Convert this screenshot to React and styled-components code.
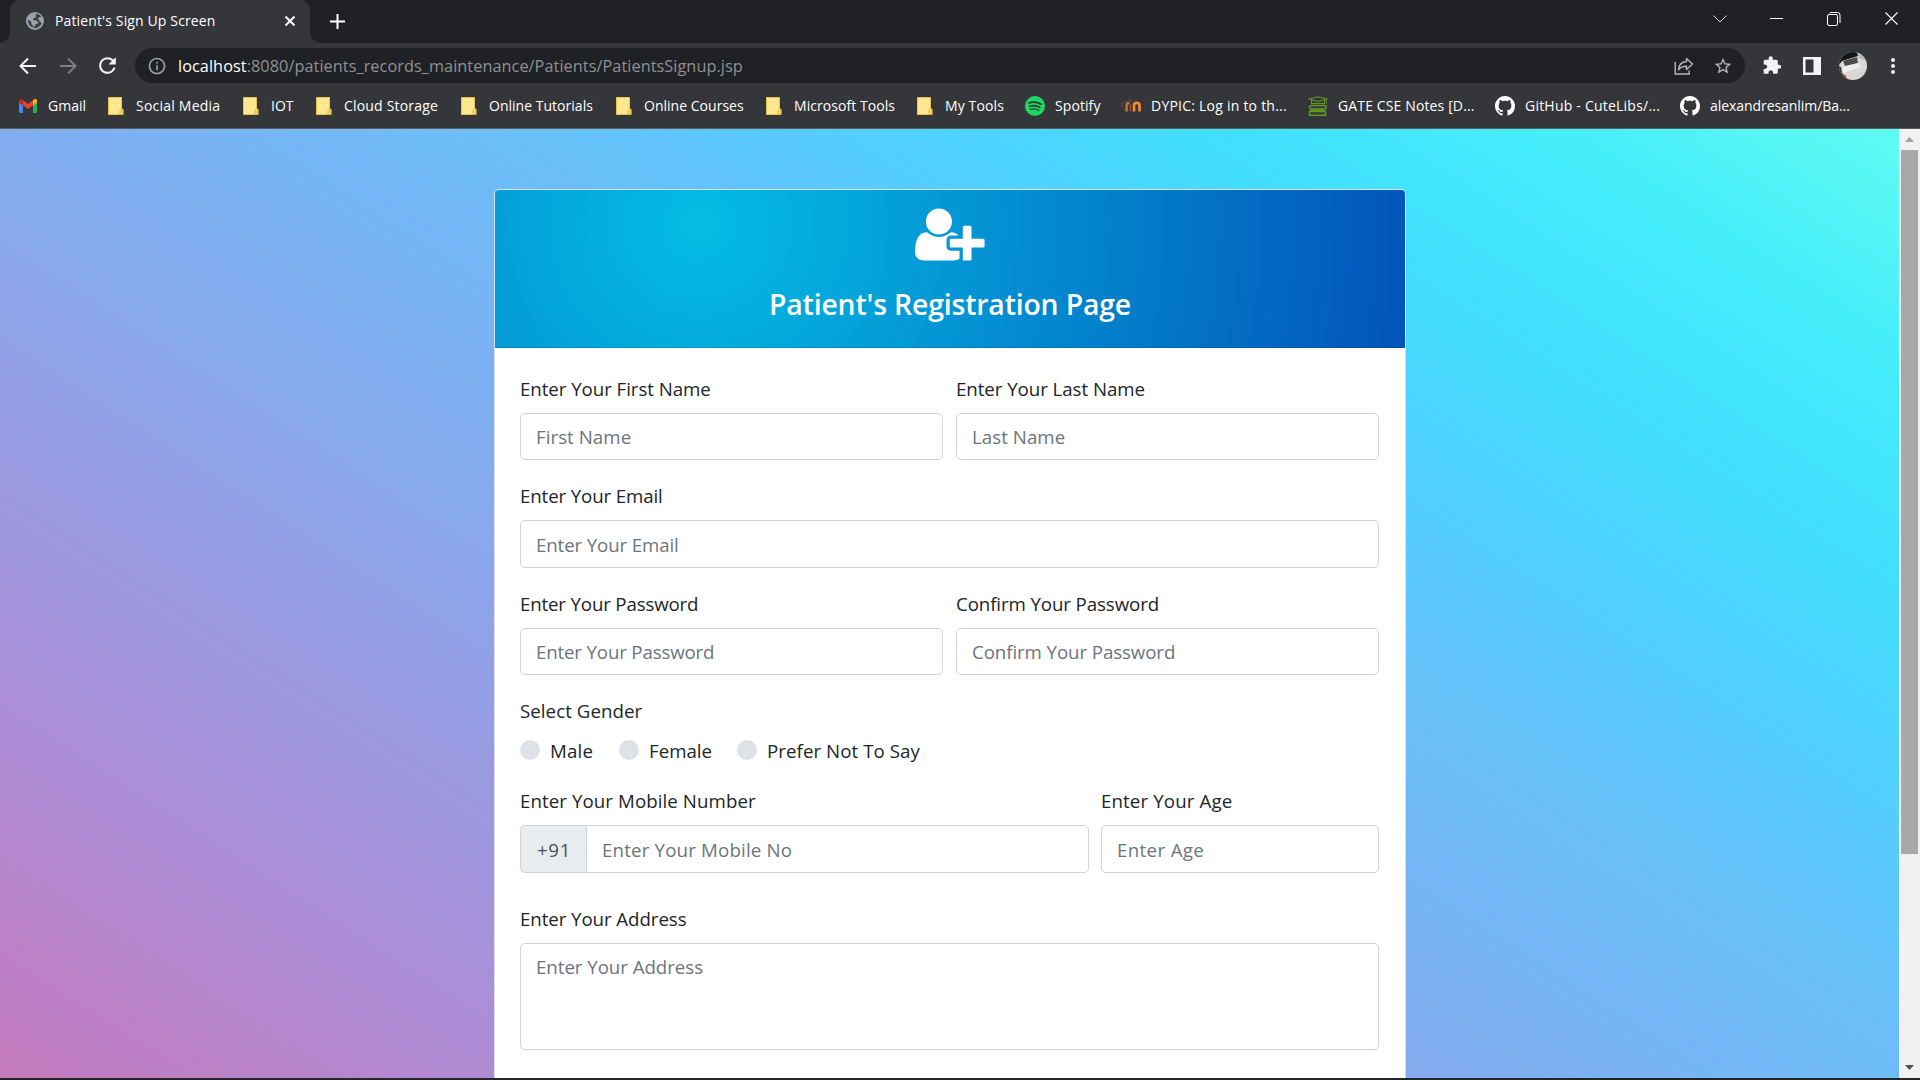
import React from "react";
import styled, { createGlobalStyle } from "styled-components";
import { MdRefresh, MdInfoOutline, MdStarBorder, MdExtension } from "react-icons/md";

const GlobalStyle = createGlobalStyle`
  *, *::before, *::after { box-sizing: border-box; }
  html, body { margin: 0; padding: 0; overflow: hidden; }
  body { font-family: "Segoe UI", "Open Sans", "Noto Sans", sans-serif; background: #202124; }
`;

const Window = styled.div`
  width: 1920px;
  height: 1080px;
  display: flex;
  flex-direction: column;
  overflow: hidden;
  background: #242526;
`;

/* ---------- Tab strip ---------- */
const TabStrip = styled.div`
  height: 43px;
  flex: none;
  display: flex;
  background: #202124;
  padding-left: 10px;
`;

const Tab = styled.div`
  position: relative;
  width: 300px;
  height: 43px;
  display: flex;
  align-items: center;
  padding: 0 12px 1px 15px;
  background: #35363a;
  border-radius: 10px 10px 0 0;
  color: #fff;
  &::before, &::after {
    content: "";
    position: absolute;
    bottom: 0;
    width: 10px;
    height: 10px;
  }
  &::before {
    left: -10px;
    background: radial-gradient(circle at 0 0, transparent 9.5px, #35363a 10px);
  }
  &::after {
    right: -10px;
    background: radial-gradient(circle at 100% 0, transparent 9.5px, #35363a 10px);
  }
`;

const Favicon = styled.span`
  display: flex;
  width: 20px;
  padding-left: 1px;
`;

const TabTitle = styled.span`
  flex: 1;
  padding-left: 10px;
  font-size: 14px;
  line-height: 20px;
  letter-spacing: 0.13px;
  white-space: nowrap;
`;

const Glyph = styled.span`
  display: flex;
  align-items: center;
  justify-content: center;
  flex: none;
  width: ${(p) => p.$w || 20}px;
  height: ${(p) => p.$h || 20}px;
  margin-left: ${(p) => p.$ml || 0}px;
  color: ${(p) => p.$c || "#fff"};
`;

const WindowButtons = styled.div`
  display: flex;
  margin-left: auto;
  height: 37px;
`;

/* ---------- Toolbar ---------- */
const Toolbar = styled.div`
  height: 45px;
  flex: none;
  display: flex;
  align-items: center;
  background: #35363a;
  padding-left: 7.5px;
`;

const AddressBar = styled.div`
  display: flex;
  align-items: center;
  width: 1610px;
  height: 35px;
  margin-left: 7.5px;
  border-radius: 18px;
  background: #202124;
  padding: 0 12px;
`;

const Url = styled.span`
  flex: 1;
  padding-left: 11px;
  font-size: 16.3px;
  line-height: 24px;
  letter-spacing: 0.05px;
  color: #8f9194;
  white-space: nowrap;
`;

const Host = styled.span`
  color: #fff;
`;

const Avatar = styled.span`
  display: flex;
  width: 28px;
  height: 28px;
  border-radius: 50%;
  overflow: hidden;
  margin-left: 17px;
`;

/* ---------- Bookmarks ---------- */
const BookmarkBar = styled.div`
  height: 41px;
  flex: none;
  display: flex;
  background: #35363a;
  border-bottom: 1px solid #5b5c60;
  padding-left: 18px;
`;

const Bookmark = styled.div`
  display: flex;
  align-items: center;
  flex: none;
  width: ${(p) => p.$w}px;
  height: 35px;
`;

const BookmarkText = styled.span`
  padding-left: 10px;
  font-size: 14px;
  line-height: 20px;
  color: #fff;
  letter-spacing: ${(p) => p.$ls || 0}px;
  white-space: nowrap;
`;

/* ---------- Page ---------- */
const Content = styled.div`
  display: flex;
  height: 949px;
  flex: none;
  overflow: hidden;
`;

const Page = styled.main`
  width: 1899px;
  height: 1225px;
  flex: none;
  display: flex;
  justify-content: center;
  padding: 60px 0 0 1px;
  background-image: linear-gradient(to right top, #d16ba5, #c777b9, #ba83ca, #aa8fd8, #9a9ae1, #8aa7ec, #79b3f4, #69bff8, #52cffe, #41dfff, #46eefa, #5ffbf1);
`;

const Card = styled.section`
  width: 912px;
  height: 1105px;
  background: #fff;
  border: 1px solid #dfdfdf;
  border-radius: 5px;
  color: #212529;
`;

const CardHeader = styled.header`
  height: 158px;
  display: flex;
  flex-direction: column;
  align-items: center;
  padding-top: 14px;
  border-bottom: 1px solid rgba(0, 0, 0, 0.125);
  border-radius: 4px 4px 0 0;
  background: radial-gradient(circle farthest-corner at 22.4% 21.7%, rgba(4, 189, 228, 1) 0%, rgba(2, 83, 185, 1) 100.2%);
`;

const Title = styled.h4`
  margin: 21px 0 0;
  font-size: 28.4px;
  line-height: 36px;
  font-weight: 600;
  letter-spacing: -0.17px;
  color: #fff;
  white-space: nowrap;
`;

const Form = styled.form`
  padding: 24.75px 26px 0 25px;
`;

const Row = styled.div`
  display: grid;
  grid-template-columns: ${(p) => p.$cols || "1fr"};
  column-gap: ${(p) => p.$gap || 13}px;
  margin-bottom: ${(p) => p.$mb || 20}px;
`;

const Label = styled.label`
  display: block;
  height: 30px;
  margin-bottom: 10px;
  padding-top: 1px;
  font-size: 18.7px;
  line-height: 30px;
  letter-spacing: ${(p) => p.$ls || 0}px;
  white-space: nowrap;
`;

const Input = styled.input`
  display: block;
  width: 100%;
  height: 47.5px;
  padding: 0 15px;
  border: 1px solid #ced4da;
  border-radius: ${(p) => (p.$joined ? "0 5px 5px 0" : "5px")};
  background: #fff;
  font: 400 18.7px/30px "Segoe UI", "Open Sans", "Noto Sans", sans-serif;
  letter-spacing: ${(p) => p.$ls || 0}px;
  color: #495057;
  outline: none;
  &::placeholder { color: #6c757d; opacity: 1; }
`;

const TextArea = styled.textarea`
  display: block;
  width: 100%;
  height: 107.5px;
  padding: 8px 15px;
  border: 1px solid #ced4da;
  border-radius: 5px;
  background: #fff;
  font: 400 18.7px/30px "Segoe UI", "Open Sans", "Noto Sans", sans-serif;
  letter-spacing: -0.04px;
  resize: none;
  outline: none;
  &::placeholder { color: #6c757d; opacity: 1; }
`;

const Group = styled.div`
  display: flex;
`;

const Addon = styled.span`
  flex: none;
  width: 66px;
  height: 47.5px;
  padding: 8.25px 0 0 1px;
  text-align: center;
  border: 1px solid #ced4da;
  border-right: 0;
  border-radius: 5px 0 0 5px;
  background: #e9ecef;
  color: #495057;
  font-size: 18.7px;
  line-height: 30px;
  letter-spacing: 0.6px;
`;

const Radios = styled.div`
  display: flex;
  height: 30px;
`;

const Radio = styled.label`
  display: flex;
  width: ${(p) => p.$w}px;
  font-size: 18.7px;
  line-height: 30px;
  padding-top: 1px;
  letter-spacing: ${(p) => p.$ls || 0}px;
  white-space: nowrap;
  &::before {
    content: "";
    width: 20px;
    height: 20px;
    margin: 4px 10px 0 0;
    border-radius: 50%;
    background: #dee2e6;
    flex: none;
  }
`;

/* ---------- Scrollbar ---------- */
const Scrollbar = styled.div`
  width: 21px;
  height: 949px;
  display: flex;
  flex-direction: column;
  align-items: center;
  background: #f1f1f1;
`;

const Thumb = styled.div`
  width: 17px;
  height: 704px;
  margin-bottom: auto;
  background: #a8a8a8;
`;

/* ---------- Drawings ---------- */
const Globe = () => (
  <svg width="18" height="18" viewBox="0 0 18 18">
    <circle cx="9" cy="9" r="9" fill="#9aa0a6" />
    <path d="M10.500 1.800l-1 2 .6 1.500-2.600.9-.3 2 3.300.2 1.800 1.500-.5 1.900-2.200.4-.8 1.800-1.200 2.200-.5-2.200-1.900-2.300.3-1.600-3.700-2.600c.2 4.400 2.700 8 7.200 8.500 3-.300 6-2.500 6.800-5.600-1 .200-2-.300-2.400-1.300l-1.400-2.500 1.600-1.500 1.600.3c-.5-1.700-2.300-3.300-4.700-3.600z" fill="#3d3f43" />
  </svg>
);

const Gmail = () => (
  <svg width="18" height="14" viewBox="0 0 18 14">
    <path d="M0 3l4 3v8H1.200A1.200 1.200 0 0 1 0 12.800z" fill="#4285f4" />
    <path d="M18 3l-4 3v8h2.800a1.200 1.200 0 0 0 1.200-1.200z" fill="#34a853" />
    <path d="M4 1.300v5L9 10l5-3.700V1.300L9 5z" fill="#ea4335" />
    <path d="M0 2v1.600l4 3V1.300L3 .5C1.700-.4 0 .4 0 2z" fill="#c5221f" />
    <path d="M18 2v1.600l-4 3V1.300l1-.8c1.300-.9 3-.1 3 1.500z" fill="#fbbc04" />
  </svg>
);

const Folder = () => (
  <svg width="16" height="18" viewBox="0 0 16 18">
    <path d="M.5.500h13v11l1.500 1v5H.500z" fill="#ffe68f" stroke="#e8c34c" strokeWidth="1" />
    <path d="M12 17.500v-4l1.500-2 1.500 1v5z" fill="#f8d766" stroke="#d9b23a" strokeWidth=".8" />
  </svg>
);

const Spotify = () => (
  <svg width="20" height="20" viewBox="0 0 20 20">
    <circle cx="10" cy="10" r="10" fill="#1ed760" />
    <g fill="none" stroke="#2c3a33" strokeLinecap="round">
      <path d="M4 6.900c4-1.200 8.500-.8 12 1.200" strokeWidth="1.900" />
      <path d="M4.600 10.200c3.500-1 7.200-.6 10.300 1.200" strokeWidth="1.600" />
      <path d="M5.100 13.300c3-.8 6-.5 8.700 1.100" strokeWidth="1.300" />
    </g>
  </svg>
);

const Moodle = () => (
  <svg width="20" height="15" viewBox="0 0 20 15">
    <path d="M.5 4l8-3.300 4 1.300-3 2.500-5 .5z" fill="#4a4240" />
    <path d="M1.200 4.500v5" stroke="#6b5a50" strokeWidth="1" />
    <path d="M5.600 13.500V7.500c0-1.800 1.200-2.500 2.600-2.500" fill="none" stroke="#d0702a" strokeWidth="2.400" />
    <path d="M9.300 5.500v8" stroke="#8a5432" strokeWidth="1.400" />
    <path d="M13 13.500V7.500c0-3.600 5.500-3.600 5.500 0v6" fill="none" stroke="#f08a2c" strokeWidth="2.700" />
  </svg>
);

const Books = () => (
  <svg width="20" height="20" viewBox="0 0 20 20" fill="none" stroke="#5f9a1f" strokeWidth="1.100">
    <path d="M1 3l9-2.300L19 3l-9 2.500zM3.500 4v3.500h13V4M18.300 3.500v4" />
    <path d="M18 9.500H3.500c-2.500 0-2.500 3.500 0 3.500H18M18 9.500v3.500" strokeWidth="1.500" />
    <path d="M2 14.500h14.500M1.500 15.500h16v3.700H1.500z" strokeWidth="1.500" />
  </svg>
);

const Github = () => (
  <svg width="20" height="20" viewBox="0 0 16 16" fill="#fff">
    <path d="M8 0C3.58 0 0 3.58 0 8c0 3.54 2.29 6.53 5.47 7.59.4.07.55-.17.55-.38 0-.19-.01-.82-.01-1.49-2.01.37-2.53-.49-2.69-.94-.09-.23-.48-.94-.82-1.13-.28-.15-.68-.52-.01-.53.63-.01 1.08.58 1.23.82.72 1.21 1.87.87 2.33.66.07-.52.28-.87.51-1.07-1.78-.2-3.64-.89-3.64-3.95 0-.87.31-1.59.82-2.15-.08-.2-.36-1.02.08-2.12 0 0 .67-.21 2.2.82.64-.18 1.32-.27 2-.27.68 0 1.36.09 2 .27 1.53-1.04 2.2-.82 2.2-.82.44 1.1.16 1.92.08 2.12.51.56.82 1.27.82 2.15 0 3.07-1.87 3.75-3.65 3.95.29.25.54.73.54 1.48 0 1.07-.01 1.93-.01 2.2 0 .21.15.46.55.38A8.013 8.013 0 0016 8c0-4.420-3.580-8-8-8z" />
  </svg>
);

const UserPlus = () => (
  <svg width="70" height="61" viewBox="0 0 2062 1792" fill="#fff">
    <path d="M704 896q-159 0-271.500-112.500t-112.500-271.500 112.500-271.500 271.500-112.500 271.500 112.500 112.500 271.500-112.500 271.500-271.500 112.500zm960 128h352q13 0 22.500 9.500t9.500 22.500v192q0 13-9.500 22.500t-22.500 9.500h-352v352q0 13-9.500 22.500t-22.500 9.500h-192q-13 0-22.500-9.500t-9.500-22.500v-352h-352q-13 0-22.500-9.500t-9.500-22.500v-192q0-13 9.500-22.500t22.500-9.500h352v-352q0-13 9.500-22.500t22.500-9.500h192q13 0 22.500 9.500t9.500 22.500v352zm-736 224q0 52 38 90t90 38h256v238q-68 50-171 50h-874q-121 0-194-69t-73-190q0-53 3.500-103.500t14-109 26.500-108.500 43-97.500 62-81 85.500-53.500 111.500-20q19 0 39 17 79 61 154.500 91.500t164.500 30.500 164.500-30.500 154.500-91.500q20-17 39-17 132 0 217 96h-223q-52 0-90 38t-38 90v192z" />
  </svg>
);

const Arrow = ({ flip }) => (
  <svg width="18" height="18" viewBox="0 0 18 18" fill="none" stroke="currentColor" strokeWidth="2">
    {flip ? <path d="M1 9h15M9 1.500L16.500 9 9 16.500" /> : <path d="M17 9H2M9 1.500L1.500 9 9 16.500" />}
  </svg>
);

const Share = () => (
  <svg width="20" height="18" viewBox="0 0 20 18" fill="none" stroke="currentColor" strokeWidth="1.400">
    <path d="M1.200 5v12h14v-3.500" />
    <path d="M12.500 1.500L18.500 7l-6 5.500V9.300c-3.500 0-6 .9-8 3.400.3-4.300 3-7.700 8-8.200z" strokeLinejoin="round" />
  </svg>
);

const AvatarPhoto = () => (
  <svg width="28" height="28" viewBox="0 0 28 28">
    <rect width="28" height="28" fill="#d9d8d5" />
    <path d="M0 0h18l1 4L3 9 0 13z" fill="#151515" />
    <path d="M18 0h10v9l-8-3z" fill="#b9bbb8" />
    <path d="M4 9l14-4 1 6-13 3z" fill="#4c4d4f" />
    <path d="M4 15l15-4 3 4-18 6z" fill="#eeeeec" />
    <path d="M0 14l2 1 1 6 4 7H3L0 22z" fill="#33302e" />
    <path d="M3 21l4 3 1 4H5z" fill="#a0482c" />
  </svg>
);

/* name, icon, slot width, tracking */
const bookmarks = [
  ["Gmail", Gmail, 88, 0],
  ["Social Media", Folder, 135, 0.22],
  ["IOT", Folder, 73, 0],
  ["Cloud Storage", Folder, 145, 0.18],
  ["Online Tutorials", Folder, 155, 0.02],
  ["Online Courses", Folder, 150, 0.02],
  ["Microsoft Tools", Folder, 151, 0.06],
  ["My Tools", Folder, 110, 0.12],
  ["Spotify", Spotify, 96, 0.08],
  ["DYPIC: Log in to th...", Moodle, 187, 0.23],
  ["GATE CSE Notes [D...", Books, 187, 0.13],
  ["GitHub - CuteLibs/...", Github, 185, 0.22],
  ["alexandresanlim/Ba...", Github, 180, -0.06],
];

const Field = ({ label, placeholder, type = "text", labelTrack, inputTrack }) => (
  <div>
    <Label $ls={labelTrack}>{label}</Label>
    <Input type={type} placeholder={placeholder} $ls={inputTrack} />
  </div>
);

export default function App() {
  return (
    <Window>
      <GlobalStyle />
      <TabStrip>
        <Tab>
          <Favicon><Globe /></Favicon>
          <TabTitle>Patient's Sign Up Screen</TabTitle>
          <Glyph $w={16}>
            <svg width="10" height="10" viewBox="0 0 10 10" stroke="#fff" strokeWidth="2"><path d="M.500.500l9 9M9.500.500l-9 9" /></svg>
          </Glyph>
        </Tab>
        <Glyph $w={30} $h={42} $ml={12}>
          <svg width="15" height="15" viewBox="0 0 15 15" stroke="#fff" strokeWidth="2"><path d="M7.500 0v15M0 7.500h15" /></svg>
        </Glyph>
        <WindowButtons>
          <Glyph $w={56} $h={37}>
            <svg width="14" height="8" viewBox="0 0 14 8" fill="none" stroke="#ddd" strokeWidth="1"><path d="M.500.500L7 7l6.500-6.500" /></svg>
          </Glyph>
          <Glyph $w={57} $h={37}>
            <svg width="13" height="1" viewBox="0 0 13 1"><rect width="13" height="1" fill="#fff" /></svg>
          </Glyph>
          <Glyph $w={58} $h={37}>
            <svg width="14" height="14" viewBox="0 0 14 14" fill="none" stroke="#fff" strokeWidth="1"><rect x=".5" y="2.500" width="10" height="11" rx="1.500" /><path d="M2.500.900C3 .5 3.500.500 4 .5h6.500a2.500 2.500 0 0 1 2.500 2.500v8" /></svg>
          </Glyph>
          <Glyph $w={57} $h={37}>
            <svg width="13" height="13" viewBox="0 0 13 13" stroke="#fff" strokeWidth="1.100"><path d="M.500.500l12 12M12.500.500l-12 12" /></svg>
          </Glyph>
        </WindowButtons>
      </TabStrip>

      <Toolbar>
        <Glyph $w={40} $c="#f1f3f4"><Arrow /></Glyph>
        <Glyph $w={40} $c="#7c7e81"><Arrow flip /></Glyph>
        <Glyph $w={40} $c="#f1f3f4"><MdRefresh size={25} /></Glyph>
        <AddressBar>
          <Glyph $c="#9aa0a6"><MdInfoOutline size={20} /></Glyph>
          <Url><Host>localhost</Host>:8080/patients_records_maintenance/Patients/PatientsSignup.jsp</Url>
          <Glyph $c="#b4b6b9"><Share /></Glyph>
          <Glyph $ml={19.5} $c="#b4b6b9"><MdStarBorder size={22} /></Glyph>
        </AddressBar>
        <Glyph $ml={17} $c="#f1f3f4"><MdExtension size={21} /></Glyph>
        <Glyph $ml={20}>
          <svg width="18" height="18" viewBox="0 0 18 18"><path d="M0 0h18v18H0zM2.500 2.500v13h8v-13z" fill="#f1f3f4" fillRule="evenodd" /></svg>
        </Glyph>
        <Avatar><AvatarPhoto /></Avatar>
        <Glyph $ml={15.5} $c="#f1f3f4">
          <svg width="4" height="18" viewBox="0 0 4 18" fill="currentColor"><circle cx="2" cy="3" r="2" /><circle cx="2" cy="9" r="2" /><circle cx="2" cy="15" r="2" /></svg>
        </Glyph>
      </Toolbar>

      <BookmarkBar>
        {bookmarks.map(([name, Icon, w, ls]) => (
          <Bookmark key={name} $w={w}>
            <Glyph><Icon /></Glyph>
            <BookmarkText $ls={ls}>{name}</BookmarkText>
          </Bookmark>
        ))}
      </BookmarkBar>

      <Content>
        <Page>
          <Card>
            <CardHeader>
              <UserPlus />
              <Title>Patient's Registration Page</Title>
            </CardHeader>
            <Form>
              <Row $cols="1fr 1fr">
                <Field label="Enter Your First Name" placeholder="First Name" labelTrack={-0.05} inputTrack={0.05} />
                <Field label="Enter Your Last Name" placeholder="Last Name" labelTrack={-0.05} inputTrack={0.05} />
              </Row>
              <Row>
                <Field label="Enter Your Email" placeholder="Enter Your Email" labelTrack={-0.12} inputTrack={-0.12} />
              </Row>
              <Row $cols="1fr 1fr">
                <Field label="Enter Your Password" placeholder="Enter Your Password" type="password" labelTrack={-0.16} inputTrack={-0.16} />
                <Field label="Confirm Your Password" placeholder="Confirm Your Password" type="password" labelTrack={-0.1} inputTrack={-0.09} />
              </Row>
              <Row>
                <Label $ls={0.05}>Select Gender</Label>
                <Radios>
                  <Radio $w={99} $ls={0.2}>Male</Radio>
                  <Radio $w={118}>Female</Radio>
                  <Radio $w={200} $ls={0.06}>Prefer Not To Say</Radio>
                </Radios>
              </Row>
              <Row $cols="569px 1fr" $gap={12} $mb={30}>
                <div>
                  <Label $ls={0.08}>Enter Your Mobile Number</Label>
                  <Group>
                    <Addon>+91</Addon>
                    <Input $joined $ls={0.17} placeholder="Enter Your Mobile No" />
                  </Group>
                </div>
                <Field label="Enter Your Age" placeholder="Enter Age" labelTrack={0.12} inputTrack={0.36} />
              </Row>
              <Row>
                <div>
                  <Label $ls={-0.07}>Enter Your Address</Label>
                  <TextArea placeholder="Enter Your Address" />
                </div>
              </Row>
            </Form>
          </Card>
        </Page>
        <Scrollbar>
          <Glyph $w={21} $h={21}>
            <svg width="9" height="5" viewBox="0 0 9 5"><path d="M0 5L4.500 0 9 5z" fill="#a3a3a3" /></svg>
          </Glyph>
          <Thumb />
          <Glyph $w={21} $h={22}>
            <svg width="9" height="5" viewBox="0 0 9 5"><path d="M0 0l4.500 5L9 0z" fill="#505050" /></svg>
          </Glyph>
        </Scrollbar>
      </Content>
    </Window>
  );
}
